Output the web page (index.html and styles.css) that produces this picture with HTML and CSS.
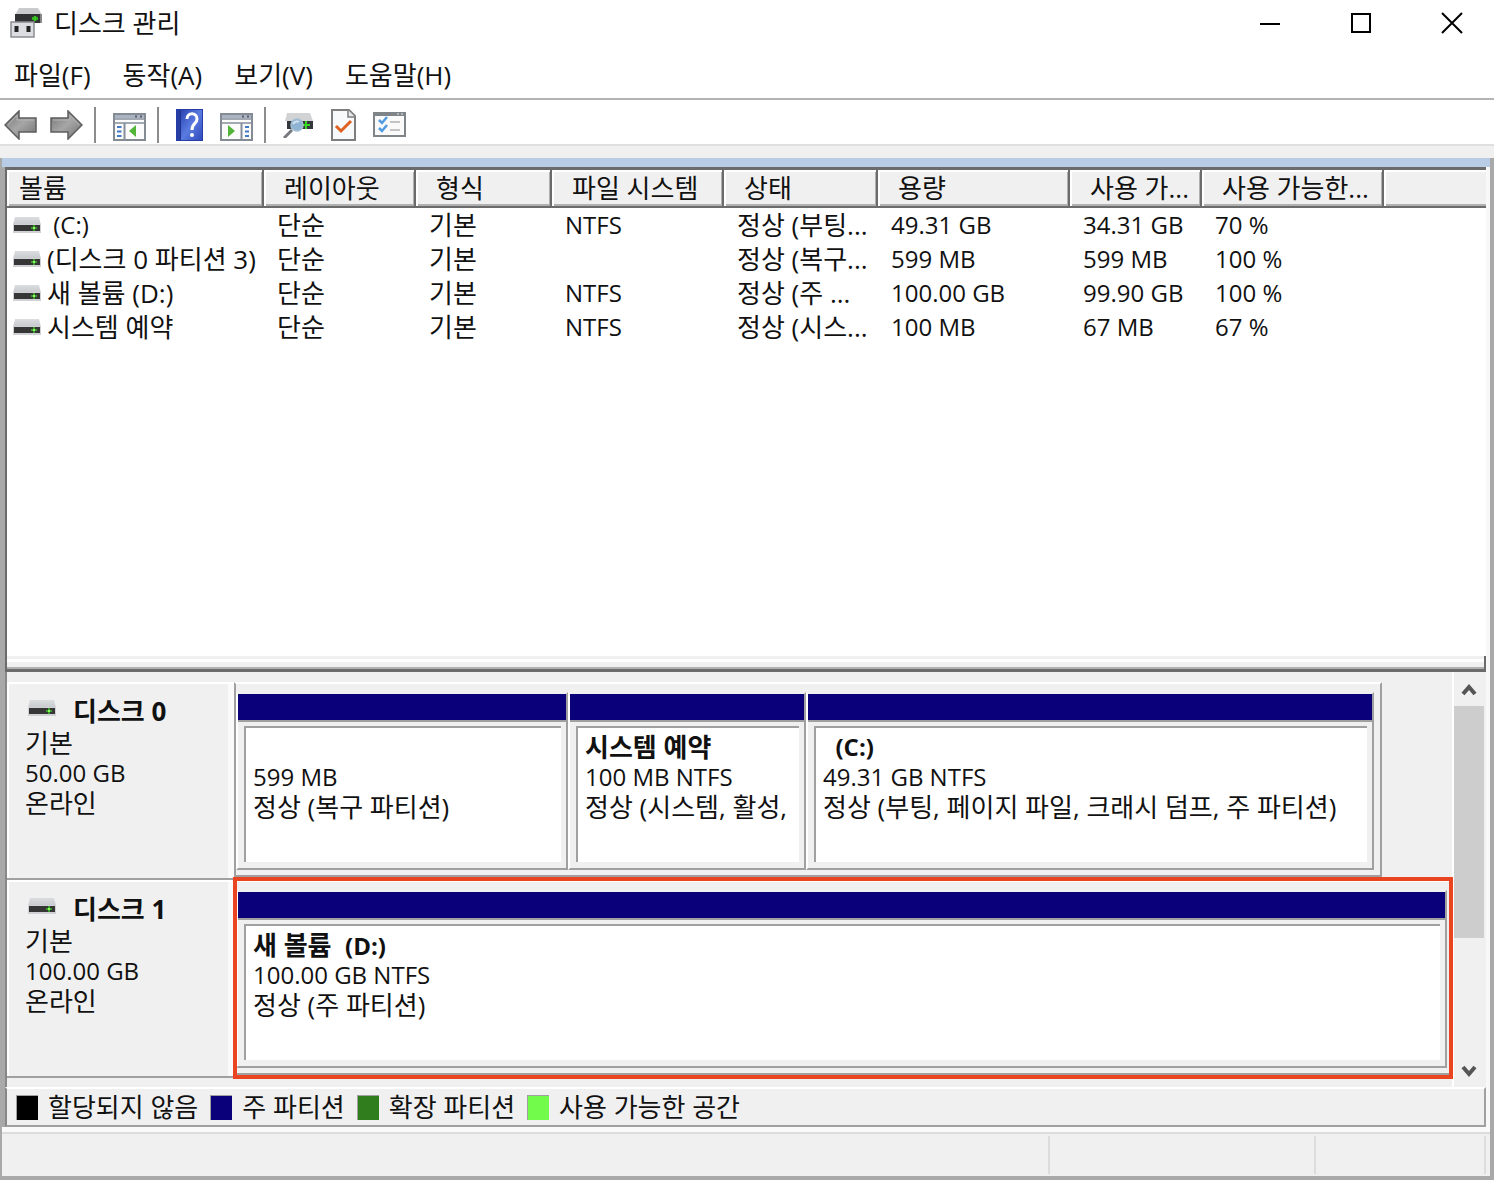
FILE: index.html
```html
<!DOCTYPE html>
<html lang="ko">
<head>
<meta charset="utf-8">
<title>디스크 관리</title>
<link rel="stylesheet" href="styles.css">
</head>
<body>
<svg class="defs" aria-hidden="true">
  <defs>
    <linearGradient id="metal" x1="0" y1="0" x2="0" y2="1"><stop offset="0" stop-color="#dcdde0"/><stop offset="1" stop-color="#c6c8cd"/></linearGradient>
    <linearGradient id="arrow" x1="0" y1="0" x2="1" y2="1"><stop offset="0" stop-color="#747474"/><stop offset=".5" stop-color="#a6a6a6"/><stop offset="1" stop-color="#707070"/></linearGradient>
    <linearGradient id="book" x1="0" y1="0" x2="1" y2="1"><stop offset="0" stop-color="#2a44b4"/><stop offset=".5" stop-color="#5a7be0"/><stop offset="1" stop-color="#2f49bb"/></linearGradient>
    <symbol id="drive" viewBox="0 0 28 16">
      <path d="M2 0H26L28 8H0Z" fill="url(#metal)"/>
      <rect y="7" width="28" height="9" fill="#cfd1d5"/>
      <rect x="1" y="8" width="26" height="6" fill="#363636"/>
      <path d="M21 8V14M18 11H24" stroke="#3a9a2a" stroke-width="2"/>
      <rect x="20" y="10" width="2" height="2" fill="#8cff60"/>
    </symbol>
    <symbol id="panel" viewBox="0 0 33 28">
      <rect x="1" y="1" width="31" height="26" fill="#fbfbfb" stroke="#858b93" stroke-width="2"/>
      <rect x="2" y="2" width="29" height="3" fill="#a9b3c1"/>
      <path d="M1 6H32M1 10H32" stroke="#858e9b" stroke-width="1.500"/>
      <path d="M22 3.500H24M27 3.500H29" stroke="#59606b" stroke-width="2"/>
    </symbol>
  </defs>
</svg>
<div class="window">
  <header class="titlebar">
    <svg class="app-icon" viewBox="0 0 32 30" aria-hidden="true">
      <path d="M9 0H28L32 7H5Z" fill="#c9cbcd"/>
      <rect x="5" y="6" width="27" height="9" fill="#303234"/>
      <rect x="30" y="6" width="2" height="9" fill="#888"/>
      <path d="M22 10.500H28M25 8V13" stroke="#35c61e" stroke-width="2.500"/>
      <rect x="1" y="14" width="23" height="15" fill="#dcdde2" stroke="#8b8d91" stroke-width="1.500"/>
      <path d="M6.500 18V24M18.500 18V24" stroke="#222" stroke-width="4"/>
    </svg>
    <h1 class="title">디스크 관리</h1>
    <div class="window-controls">
      <button aria-label="최소화"><svg width="22" height="22"><path d="M1 12H21" stroke="#000" stroke-width="2"/></svg></button>
      <button aria-label="최대화"><svg width="22" height="22"><rect x="2" y="2" width="18" height="18" fill="none" stroke="#000" stroke-width="2"/></svg></button>
      <button aria-label="닫기"><svg width="22" height="22"><path d="M1 1L21 21M21 1L1 21" stroke="#000" stroke-width="2"/></svg></button>
    </div>
  </header>
  <nav class="menu">
    <button>파일(F)</button>
    <button>동작(A)</button>
    <button>보기(V)</button>
    <button>도움말(H)</button>
  </nav>
  <div class="toolbar" role="toolbar">
    <div class="tools arrows">
      <button aria-label="뒤로"><svg width="33" height="30"><path d="M1 15L15 1V8H32V22H15V29Z" fill="url(#arrow)" stroke="#5e5e5e" stroke-width="1.500"/><path d="M4 15L13 5V10H30" fill="none" stroke="#b5b5b5"/></svg></button>
      <button aria-label="앞으로"><svg width="33" height="30"><path d="M32 15L18 1V8H1V22H18V29Z" fill="url(#arrow)" stroke="#5e5e5e" stroke-width="1.500"/><path d="M3 10H20V5L29 15" fill="none" stroke="#b5b5b5"/></svg></button>
    </div>
    <div class="tools">
      <button class="low" aria-label="콘솔 트리 표시"><svg width="33" height="28"><use href="#panel"/><path d="M11.500 10V27" stroke="#858e9b" stroke-width="2"/><path d="M4 14H8.500M4 18.500H8.500M4 23H8.500" stroke="#4178c8" stroke-width="2"/><path d="M23 12V24L16 18Z" fill="#52b53a"/></svg></button>
    </div>
    <div class="tools">
      <button aria-label="도움말"><svg width="27" height="32"><rect width="27" height="32" fill="#253da5"/><rect x="5" y="1" width="21" height="30" fill="url(#book)"/><path d="M4.500 1V31" stroke="#1e3288"/><path d="M11 10C11 3 21 3 21 10C21 15 16 14 16 21" fill="none" stroke="#fff" stroke-width="3"/><rect x="14" y="24" width="4" height="4" rx="2" fill="#fff"/></svg></button>
      <button class="low" aria-label="작업 창 표시"><svg width="33" height="28"><use href="#panel"/><path d="M21.500 10V27" stroke="#858e9b" stroke-width="2"/><path d="M25 14H29M25 18.500H29M25 23H29" stroke="#4178c8" stroke-width="2"/><path d="M8 12V24L15 18Z" fill="#52b53a"/></svg></button>
    </div>
    <div class="tools">
      <button aria-label="디스크 다시 검사"><svg width="31" height="26"><path d="M4 1H27L30 9H2Z" fill="#d2d3d5"/><rect x="4" y="9" width="26" height="8" fill="#34383c"/><path d="M23 9V17M19 13H27" stroke="#35d823" stroke-width="2"/><path d="M9 18L1 26" stroke="#777b80" stroke-width="3"/><circle cx="14" cy="13" r="6" fill="#8fb3d2" stroke="#a4bfd4" stroke-width="1.500"/><path d="M10 12C12 9 15 9 16 10" stroke="#cfe2f2" stroke-width="2" fill="none"/></svg></button>
      <button aria-label="속성"><svg width="25" height="32"><path d="M1 1H18L24 7V31H1Z" fill="#f8f9fb" stroke="#7e7e7e" stroke-width="2"/><path d="M17 1V8H24" fill="#e8e8e8" stroke="#7e7e7e" stroke-width="1.500"/><path d="M5 17L10 22L20 12" fill="none" stroke="#e0601f" stroke-width="3"/></svg></button>
      <button aria-label="작업 목록"><svg width="33" height="25"><rect x="1" y="1" width="31" height="23" fill="#fafafa" stroke="#7e8488" stroke-width="2"/><path d="M1 2.500H32" stroke="#7e8488" stroke-width="3"/><path d="M24 2H26M28 2H30" stroke="#e8e8e8"/><path d="M6 8L9 11L14 5M6 16L9 19L14 13" fill="none" stroke="#519be0" stroke-width="2.500"/><path d="M17 10H27M17 18H27" stroke="#c3c3c3" stroke-width="2"/></svg></button>
    </div>
  </div>
  <main class="frame">
    <div class="strip"></div>
    <div class="console">
      <section class="volumes">
        <table>
          <colgroup><col class="c-name"><col class="c-layout"><col class="c-type"><col class="c-fs"><col class="c-status"><col class="c-size"><col class="c-free"><col class="c-pct"><col></colgroup>
          <thead><tr><th>볼륨</th><th>레이아웃</th><th>형식</th><th>파일 시스템</th><th>상태</th><th>용량</th><th>사용 가...</th><th>사용 가능한...</th><th></th></tr></thead>
          <tbody>
            <tr><td><svg class="drive"><use href="#drive"/></svg><span class="num">&nbsp;(C:)</span></td><td>단순</td><td>기본</td><td class="num">NTFS</td><td>정상 (부팅...</td><td class="num">49.31 GB</td><td class="num">34.31 GB</td><td class="num">70 %</td><td></td></tr>
            <tr><td><svg class="drive"><use href="#drive"/></svg>(디스크 0 파티션 3)</td><td>단순</td><td>기본</td><td></td><td>정상 (복구...</td><td class="num">599 MB</td><td class="num">599 MB</td><td class="num">100 %</td><td></td></tr>
            <tr><td><svg class="drive"><use href="#drive"/></svg>새 볼륨 (D:)</td><td>단순</td><td>기본</td><td class="num">NTFS</td><td>정상 (주 ...</td><td class="num">100.00 GB</td><td class="num">99.90 GB</td><td class="num">100 %</td><td></td></tr>
            <tr><td><svg class="drive"><use href="#drive"/></svg>시스템 예약</td><td>단순</td><td>기본</td><td class="num">NTFS</td><td>정상 (시스...</td><td class="num">100 MB</td><td class="num">67 MB</td><td class="num">67 %</td><td></td></tr>
          </tbody>
        </table>
      </section>
      <div class="splitter"></div>
      <section class="graphical">
        <div class="disks">
          <article class="disk">
            <div class="disk-label">
              <h2><svg class="drive"><use href="#drive"/></svg>디스크 0</h2>
              <p>기본</p><p class="num">50.00 GB</p><p>온라인</p>
            </div>
            <div class="graph short">
              <div class="partition recovery"><div class="bar"></div><div class="box"><h3></h3><p class="num">599 MB</p><p>정상 (복구 파티션)</p></div></div>
              <div class="partition reserved"><div class="bar"></div><div class="box"><h3>시스템 예약</h3><p class="num">100 MB NTFS</p><p>정상 (시스템, 활성,</p></div></div>
              <div class="partition system"><div class="bar"></div><div class="box"><h3 class="num">&nbsp; (C:)</h3><p class="num">49.31 GB NTFS</p><p>정상 (부팅, 페이지 파일, 크래시 덤프, 주 파티션)</p></div></div>
            </div>
          </article>
          <article class="disk">
            <div class="disk-label">
              <h2><svg class="drive"><use href="#drive"/></svg>디스크 1</h2>
              <p>기본</p><p class="num">100.00 GB</p><p>온라인</p>
            </div>
            <div class="graph marked">
              <div class="partition"><div class="bar"></div><div class="box"><h3>새 볼륨&nbsp; <span class="num">(D:)</span></h3><p class="num">100.00 GB NTFS</p><p>정상 (주 파티션)</p></div></div>
            </div>
          </article>
        </div>
        <div class="scrollbar">
          <button aria-label="위로"><svg width="16" height="14"><path d="M2 11L8 4L14 11" fill="none" stroke="#555" stroke-width="4"/></svg></button>
          <div class="track"><div class="thumb"></div></div>
          <button aria-label="아래로"><svg width="16" height="14"><path d="M2 3L8 10L14 3" fill="none" stroke="#555" stroke-width="4"/></svg></button>
        </div>
      </section>
      <ul class="legend">
        <li><span class="swatch unallocated"></span>할당되지 않음</li>
        <li><span class="swatch primary"></span>주 파티션</li>
        <li><span class="swatch extended"></span>확장 파티션</li>
        <li><span class="swatch free"></span>사용 가능한 공간</li>
      </ul>
    </div>
    <footer class="statusbar"><div></div><div class="mid"></div><div class="end"></div></footer>
  </main>
</div>
</body>
</html>
```
FILE: styles.css
```css
* { box-sizing: border-box; }
body {
  margin: 0;
  background: #fff;
  color: #111;
  font: 26px/30px "Open Sans", "Noto Sans CJK KR", sans-serif;
}
h1, h2, h3, p, ul { margin: 0; padding: 0; font-size: inherit; }
button {
  margin: 0;
  padding: 0;
  border: 0;
  background: none;
  color: inherit;
  font: inherit;
}
svg { display: block; flex: none; }
.defs { position: absolute; width: 0; height: 0; }
.num { font-size: 24px; }
.drive { width: 28px; height: 16px; }

.window {
  display: flex;
  flex-direction: column;
  min-height: 100vh;
  background: #f0f0f0;
}
.titlebar, .menu, .toolbar { background: #fff; }

.titlebar { display: flex; align-items: center; height: 46px; padding-left: 10px; }
.app-icon { width: 32px; height: 30px; }
.title { margin-left: 12px; font-weight: 400; }
.window-controls { display: flex; gap: 7px; margin-left: auto; }
.window-controls button { display: flex; justify-content: center; width: 84px; }

.menu { display: flex; gap: 32px; align-items: center; height: 52px; padding: 6px 14px 0; }

.toolbar {
  display: flex;
  align-items: center;
  height: 48px;
  padding: 5px 0 0 4px;
  border-top: 2px solid #b4b4b4;
  border-bottom: 2px solid #dfdfdf;
}
.tools { display: flex; align-items: center; gap: 17px; height: 36px; }
.arrows { gap: 13px; }
.low { padding-top: 4px; }
.tools + .tools { margin-left: 11px; padding-left: 17px; border-left: 2px solid #8c8c8c; }

.frame {
  display: flex;
  flex: 1;
  flex-direction: column;
  margin-top: 12px;
  border: solid #a9a9a9;
  border-width: 0 4px 4px 2px;
}
.strip { height: 9px; background: #b9cce5; }
.console {
  display: flex;
  flex: 1;
  flex-direction: column;
  border-left: 3px solid #a9a9a9;
  border-right: 4px solid #f8f8f8;
}
.volumes {
  flex: 1;
  border-top: 3px solid #6b6b6b;
  border-left: 2px solid #6b6b6b;
  background: #fff;
}
.volumes table { width: 100%; table-layout: fixed; border-spacing: 0; }
.c-name { width: 257px; }
.c-layout { width: 152px; }
.c-type { width: 136px; }
.c-fs { width: 172px; }
.c-status { width: 154px; }
.c-size { width: 192px; }
.c-free { width: 132px; }
.c-pct { width: 182px; }
.volumes th {
  height: 38px;
  padding: 0 0 0 20px;
  border-right: 2px solid #6b6b6b;
  border-bottom: 2px solid #6b6b6b;
  background: #f0f0f0;
  box-shadow: inset 2px 2px #fff, inset -1px -2px #b0b0b0;
  font-weight: 400;
  text-align: left;
  white-space: nowrap;
}
.volumes th:first-child { padding-left: 12px; }
.volumes th:last-child { border-right: 0; box-shadow: inset 2px 2px #fff, inset 0 -2px #b0b0b0; }
.volumes td { height: 34px; padding: 0 0 0 13px; white-space: nowrap; }
.volumes td:first-child { display: flex; align-items: center; gap: 6px; padding-left: 6px; }

.splitter {
  height: 16px;
  border: solid #6b6b6b;
  border-width: 0 2px 3px;
  background: linear-gradient(#f0f0f0 3px, #fff 3px 6px, #f0f0f0 6px 11px, #b0b0b0 11px);
}

.graphical { display: flex; border-left: 2px solid #888; }
.disks { flex: 1; min-width: 0; padding: 10px 0 9px; }
.disk { display: flex; height: 198px; }
.disk-label {
  width: 227px;
  padding: 12px 0 0 18px;
  border-top: 2px solid #fff;
  border-bottom: 2px solid #a0a0a0;
  box-shadow: inset 2px 0 #fff, inset -6px 0 #fafafa;
}
.disk h2 { display: flex; align-items: center; gap: 17px; margin-bottom: 2px; padding-left: 3px; }
.disk h2 .drive { margin-bottom: 6px; }
.graph {
  position: relative;
  display: flex;
  flex: 1;
  min-width: 0;
  margin-bottom: 3px;
  padding: 8px 3px 5px 0;
  border: 2px solid #a0a0a0;
  border-top-color: #fff;
}
.short { margin-right: 70px; padding-right: 6px; }
.marked::after {
  content: "";
  position: absolute;
  inset: -5px -3px -6px;
  border: 4px solid #ea4420;
}
.partition {
  display: flex;
  flex: 1 1 0;
  flex-direction: column;
  min-width: 0;
  border: 2px solid #a0a0a0;
  border-top-color: #f0f0f0;
  border-left-color: #fff;
}
.recovery { flex-grow: 328; }
.reserved { flex-grow: 234; }
.system { flex-grow: 564; }
.bar { height: 28px; border-bottom: 2px solid #a0a0a0; background: #0a007a; }
.box {
  flex: 1;
  margin: 4px 5px 6px 6px;
  padding: 4px 0 0 7px;
  border: solid #a0a0a0;
  border-width: 2px 0 0 2px;
  background: #fff;
  overflow: hidden;
  white-space: nowrap;
}
.box h3 { height: 30px; }

.scrollbar { display: flex; flex-direction: column; width: 34px; border-left: 2px solid #fff; padding-right: 2px; }
.scrollbar button { display: flex; align-items: center; justify-content: center; height: 34px; padding-top: 2px; }
.track { flex: 1; }
.thumb { height: 67%; background: #cdcdcd; }

.legend {
  display: flex;
  gap: 12px;
  height: 40px;
  padding-left: 9px;
  border: 2px solid #a0a0a0;
  border-top-color: #fff;
  border-left-color: #888;
  list-style: none;
}
.legend li { display: flex; align-items: center; gap: 10px; }
.swatch { width: 22px; height: 25px; border: solid #a0a0a0; border-width: 1px 0 0 1px; }
.unallocated { background: #000; }
.primary { background: #0a007a; }
.extended { background: #2f7d1c; }
.free { background: #73fb4c; }

.statusbar {
  display: flex;
  height: 49px;
  padding: 2px 4px 2px 0;
  border-top: 5px solid #fafafa;
  box-shadow: inset 0 2px #dcdcdc;
}
.statusbar div { flex: 1; margin-top: 2px; border-right: 2px solid #dcdcdc; }
.statusbar .mid { flex: 0 0 266px; }
.statusbar .end { flex: 0 0 170px; }
```
